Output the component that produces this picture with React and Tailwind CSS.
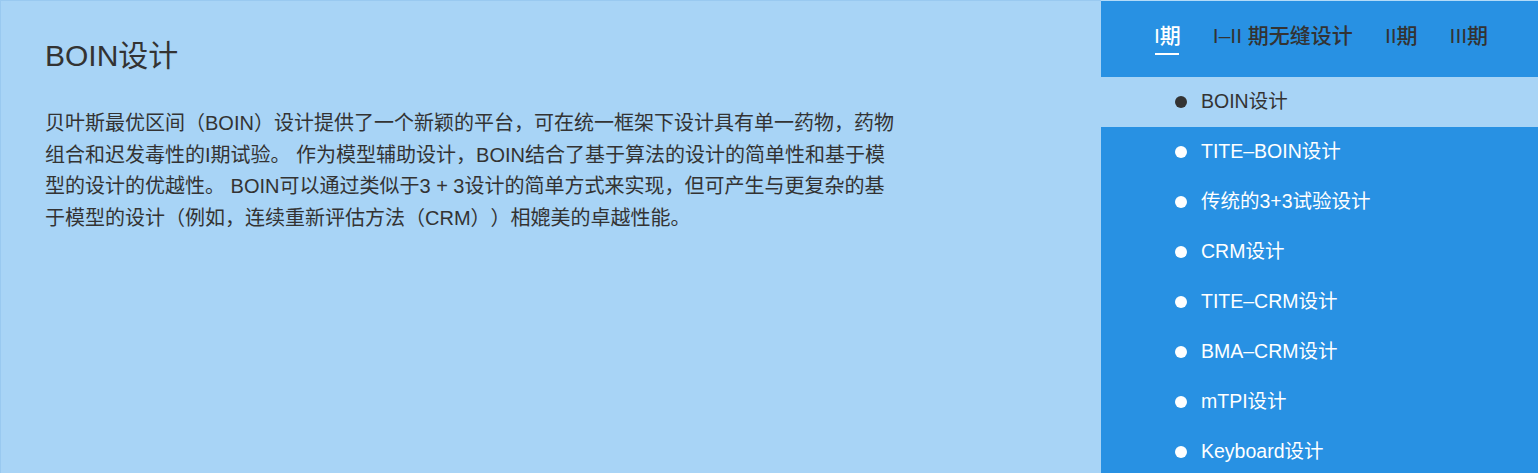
import React from "react";

const tabs = ["I期", "I–II 期无缝设计", "II期", "III期"];

const designs = [
  "BOIN设计",
  "TITE–BOIN设计",
  "传统的3+3试验设计",
  "CRM设计",
  "TITE–CRM设计",
  "BMA–CRM设计",
  "mTPI设计",
  "Keyboard设计",
];

const App = () => {
  const activeTab = 0;
  const activeItem = 0;

  return (
    <div
      className="flex h-[473px] w-full overflow-hidden bg-[#a8d4f6] text-[#333333]"
      style={{ fontFamily: '"Liberation Sans", "Noto Sans CJK SC", sans-serif' }}
    >
      {/* Main content */}
      <div className="w-[1101px] shrink-0 border-l border-t border-[#99c9f0] pl-[44px] pt-[35px]">
        <h1 className="text-[30px] leading-[40px]">BOIN设计</h1>
        <p className="mt-[32px] max-w-[856px] text-[20px] leading-[31.5px] [text-spacing-trim:space-all]">
          贝叶斯最优区间（BOIN）设计提供了一个新颖的平台，可在统一框架下设计具有单一药物，药物组合和迟发毒性的I期试验。 作为模型辅助设计，BOIN结合了基于算法的设计的简单性和基于模型的设计的优越性。 BOIN可以通过类似于3 + 3设计的简单方式来实现，但可产生与更复杂的基于模型的设计（例如，连续重新评估方法（CRM））相媲美的卓越性能。
        </p>
      </div>

      {/* Side navigation */}
      <div className="flex-1 border-t border-[#b3dbf8] bg-[#2891e3]">
        <div className="flex h-[76px] items-center gap-[32px] pb-[6px] pl-[53px]">
          {tabs.map((tab, i) => (
            <div
              key={tab}
              className={`relative text-[21px] font-medium leading-[28px] ${
                i === activeTab ? "text-white" : "text-[#333333]"
              }`}
            >
              {tab}
              {i === activeTab && (
                <span className="absolute left-[1px] right-[2px] top-[31px] h-[2px] bg-white" />
              )}
            </div>
          ))}
        </div>
        <ul>
          {designs.map((name, i) => (
            <li
              key={name}
              className={`flex h-[50px] items-center gap-[14px] pl-[74px] text-[19.5px] ${
                i === activeItem ? "bg-[#a8d4f6] text-[#333333]" : "text-white"
              }`}
            >
              <span
                className={`h-[12px] w-[12px] rounded-full ${
                  i === activeItem ? "bg-[#333333]" : "bg-white"
                }`}
              />
              {name}
            </li>
          ))}
        </ul>
      </div>
    </div>
  );
};

export default App;
